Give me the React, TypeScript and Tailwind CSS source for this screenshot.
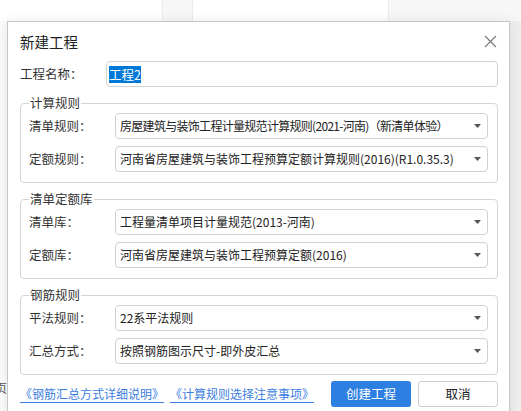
import React from "react";

const font = { fontFamily: '"Noto Sans CJK SC", "Noto Sans", sans-serif' };

const Select = ({ value, tight }: { value: string; tight?: boolean }) => {
  return (
    <div className="flex h-[26px] min-w-0 flex-1 items-center justify-between rounded-[4px] border border-[#d2d2d2] bg-white pl-[4px] pr-[6px]">
      <span
        className={
          tight
            ? "overflow-hidden whitespace-nowrap text-[12px] tracking-[-0.7px] text-[#222]"
            : "truncate text-[12px] text-[#222]"
        }
      >
        {value}
      </span>
      <svg width="7" height="4" viewBox="0 0 7 4" className="ml-[4px] shrink-0">
        <path d="M0 0 H7 L3.5 4 Z" fill="#555" />
      </svg>
    </div>
  );
};

const Row = ({ label, value, tight }: { label: string; value: string; tight?: boolean }) => {
  return (
    <div className="flex items-center">
      <div className="w-[86px] shrink-0 text-[12.5px] text-[#333]">{label}</div>
      <Select value={value} tight={tight} />
    </div>
  );
};

const Group = ({ title, children }: { title: string; children: React.ReactNode }) => {
  return (
    <div className="relative mt-[16px] rounded-[4px] border border-[#d4d4d4] pb-[10px] pl-[8px] pr-[9px] pt-[9px]">
      <span className="absolute left-[8px] top-[-10px] bg-white px-[1px] text-[12.5px] leading-[18px] text-[#333]">
        {title}
      </span>
      <div className="flex flex-col gap-[7px]">{children}</div>
    </div>
  );
};

const App = () => {
  return (
    <div className="relative h-[411px] w-[521px] overflow-hidden bg-white" style={font}>
      {/* app behind the dialog */}
      <div className="flex h-full flex-col">
        <div className="flex h-[21px] shrink-0">
          <div className="w-[162px] bg-white" />
          <div className="w-[31px] border-x border-[#ececec] bg-[#f7f7f7]" />
          <div className="w-[195px] bg-white" />
          <div className="flex-1 border-l border-[#ececec] bg-[#f7f7f7]" />
        </div>
        <div className="flex flex-1">
          <div className="flex w-[7px] flex-col justify-end overflow-hidden bg-[#fafafa] pb-[14px]">
            <span className="-ml-[5px] text-[12px] text-[#555]">页</span>
          </div>
          <div className="flex-1" />
          <div className="w-[11px] bg-[#eeeeee]" />
        </div>
      </div>

      {/* dialog */}
      <div className="absolute left-[7px] top-[21px] h-[400px] w-[503px] border border-b-0 border-[#c6c6c6] bg-white pl-[12px] pr-[11px] shadow-[0_0_12px_rgba(0,0,0,0.08)]">
        <div className="flex h-[39px] items-center justify-between">
          <span className="text-[14.5px] text-[#222]">新建工程</span>
          <svg width="13" height="13" viewBox="0 0 13 13" className="mr-[1px]">
            <path d="M1 1 L12 12 M12 1 L1 12" stroke="#777" strokeWidth="1.1" />
          </svg>
        </div>

        <div className="flex items-center">
          <div className="w-[86px] shrink-0 text-[12.5px] text-[#333]">工程名称：</div>
          <div className="flex h-[26px] flex-1 items-center rounded-[4px] border border-[#d2d2d2] bg-white pl-[2px]">
            <span className="bg-[#0078d7] text-[12.5px] leading-[17px] text-white">工程2</span>
          </div>
        </div>

        <Group title="计算规则">
          <Row label="清单规则：" value="房屋建筑与装饰工程计量规范计算规则(2021-河南)（新清单体验）" tight />
          <Row label="定额规则：" value="河南省房屋建筑与装饰工程预算定额计算规则(2016)(R1.0.35.3)" />
        </Group>

        <Group title="清单定额库">
          <Row label="清单库：" value="工程量清单项目计量规范(2013-河南)" />
          <Row label="定额库：" value="河南省房屋建筑与装饰工程预算定额(2016)" />
        </Group>

        <Group title="钢筋规则">
          <Row label="平法规则：" value="22系平法规则" />
          <Row label="汇总方式：" value="按照钢筋图示尺寸-即外皮汇总" />
        </Group>

        <div className="mt-[6px] flex items-center">
          <div className="flex flex-1 items-center gap-[6px]">
            <a className="border-b border-[#3b7de0] pb-[1px] text-[12px] leading-[15px] text-[#3b7de0]">
              《钢筋汇总方式详细说明》
            </a>
            <a className="border-b border-[#3b7de0] pb-[1px] text-[12px] leading-[15px] text-[#3b7de0]">
              《计算规则选择注意事项》
            </a>
          </div>
          <div className="flex gap-[7px]">
            <button className="h-[26px] w-[80px] rounded-[3px] bg-[#2d7fe2] text-[12.5px] text-white">
              创建工程
            </button>
            <button className="h-[26px] w-[80px] rounded-[3px] border border-[#cfcfcf] bg-white text-[12.5px] text-[#222]">
              取消
            </button>
          </div>
        </div>
      </div>
    </div>
  );
};

export default App;
